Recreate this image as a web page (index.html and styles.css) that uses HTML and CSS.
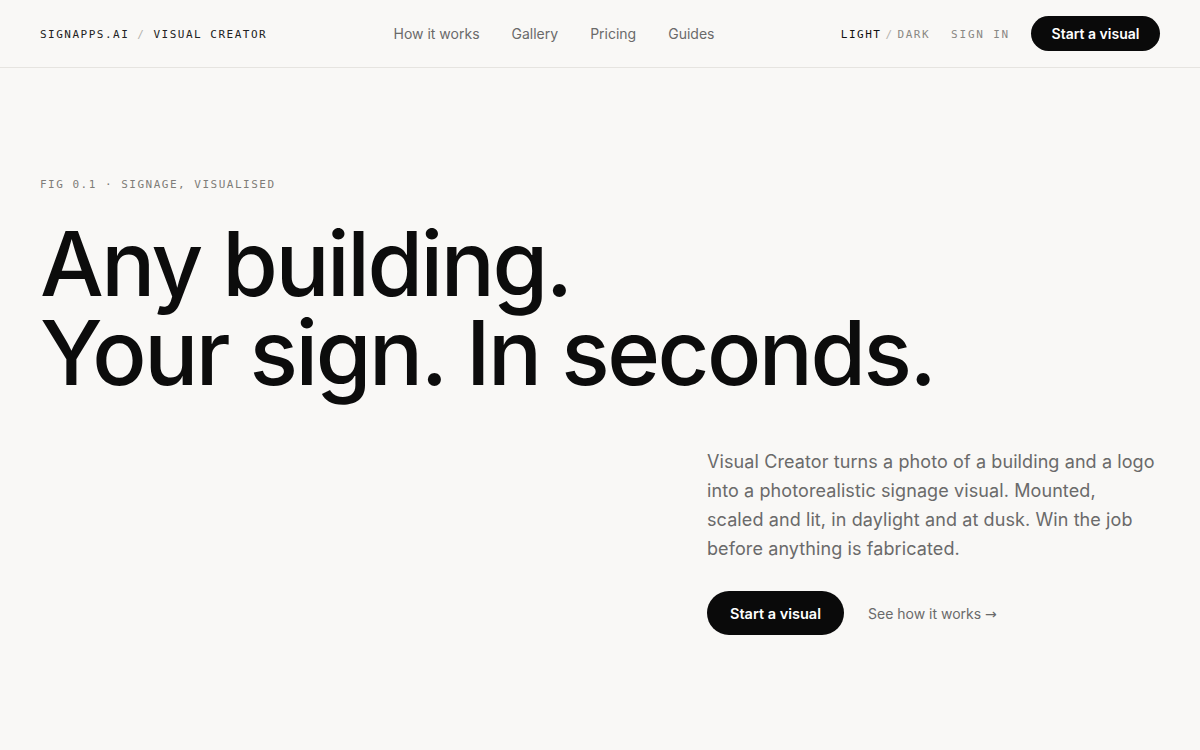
FILE: index.html
```html
<!DOCTYPE html>
<html lang="en">
<head>
<meta charset="utf-8">
<title>SignApps.ai / Visual Creator</title>
<link rel="stylesheet" href="styles.css">
</head>
<body>
<header class="topbar">
  <div class="brand"><span class="brand-name">SIGNAPPS.AI</span><span class="brand-sep">/</span><span class="brand-name">VISUAL CREATOR</span></div>
  <nav class="nav">
    <a href="#">How it works</a>
    <a href="#">Gallery</a>
    <a href="#">Pricing</a>
    <a href="#">Guides</a>
  </nav>
  <div class="actions">
    <div class="theme"><span class="theme-on">LIGHT</span><span class="theme-sep">/</span><span class="theme-off">DARK</span></div>
    <a href="#" class="signin">SIGN IN</a>
    <a href="#" class="btn btn-sm">Start a visual</a>
  </div>
</header>
<main class="hero">
  <p class="fig">FIG 0.1 · SIGNAGE, VISUALISED</p>
  <h1 class="title">Any building.<br>Your sign. In seconds.</h1>
  <div class="lede">
    <p class="lede-text">Visual Creator turns a photo of a building and a logo<br> into a photorealistic signage visual. Mounted,<br> scaled and lit, in daylight and at dusk. Win the job<br> before anything is fabricated.</p>
    <div class="cta">
      <a href="#" class="btn btn-lg">Start a visual</a>
      <a href="#" class="link">See how it works <span class="arrow">→</span></a>
    </div>
  </div>
</main>
</body>
</html>
```

FILE: styles.css
```css
* { box-sizing: border-box; }
html, body { margin: 0; padding: 0; }
body {
  background: #f9f8f6;
  color: #0c0c0c;
  font-family: Inter, "Noto Sans", sans-serif;
  width: 1200px;
  height: 750px;
  overflow: hidden;
}
a { text-decoration: none; color: inherit; }

.topbar {
  height: 68px;
  border-bottom: 1px solid #e6e4e0;
  padding: 0 40px;
  display: flex;
  align-items: center;
  justify-content: space-between;
}
.brand {
  font-family: "DejaVu Sans Mono", "Liberation Mono", monospace;
  font-size: 11px;
  letter-spacing: 1.5px;
  color: #222;
  display: flex;
  gap: 8px;
  padding-top: 1px;
}
.brand-sep { color: #b5b3ae; }
.nav { display: flex; gap: 32px; }
.nav a { font-size: 14px; color: #6a6a6a; }
.actions { display: flex; align-items: center; gap: 21px; }
.theme {
  font-family: "DejaVu Sans Mono", "Liberation Mono", monospace;
  font-size: 11px;
  letter-spacing: 1.5px;
  display: flex;
  gap: 4px;
  padding-top: 1px;
}
.theme-on { color: #111; }
.theme-sep { color: #b5b3ae; }
.theme-off { color: #8a8884; }
.signin {
  font-family: "DejaVu Sans Mono", "Liberation Mono", monospace;
  font-size: 11px;
  letter-spacing: 1.8px;
  color: #8a8884;
  padding-top: 1px;
}
.btn {
  background: #0a0a0a;
  color: #fff;
  font-weight: 600;
  border-radius: 999px;
  display: inline-flex;
  align-items: center;
  justify-content: center;
}
.btn-sm { height: 35px; width: 129px; font-size: 14px; }
.btn-lg { height: 44px; width: 137px; font-size: 14.5px; }

.hero { padding: 110px 40px 0; }
.fig {
  margin: 0;
  font-family: "DejaVu Sans Mono", "Liberation Mono", monospace;
  font-size: 11px;
  letter-spacing: 1.5px;
  color: #7e7c78;
}
.title {
  margin: 28px 0 0;
  font-size: 90px;
  font-weight: 500;
  line-height: 89px;
  letter-spacing: -2.5px;
  color: #0c0c0c;
}
.lede { margin: 50px 0 0 667px; width: 460px; }
.lede-text {
  margin: 0;
  font-size: 18px;
  line-height: 29px;
  letter-spacing: 0.1px;
  color: #6a6a6a;
}
.cta { margin-top: 28px; display: flex; align-items: center; gap: 24px; }
.link { font-size: 14px; color: #6a6a6a; }
.arrow { font-family: "DejaVu Sans", sans-serif; }
```
